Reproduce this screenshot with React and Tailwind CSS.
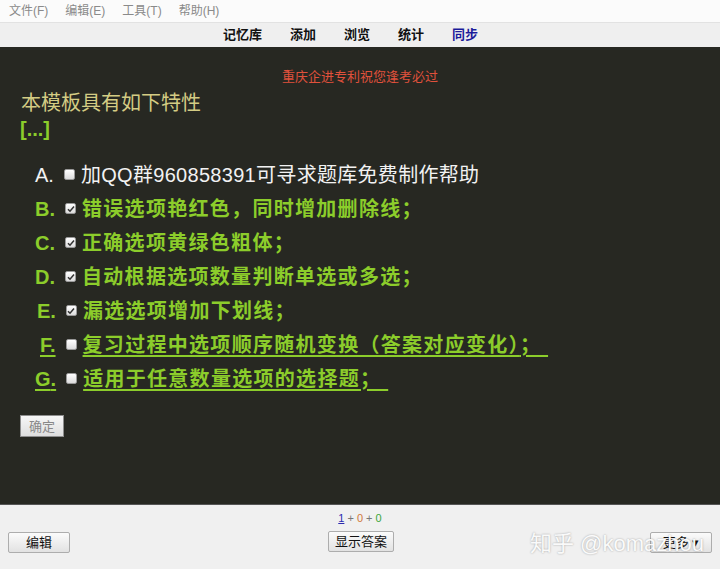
const options = [
  { key: "A", text: "加QQ群960858391可寻求题库免费制作帮助", state: "plain", checked: false, pl: "pl-[35px]" },
  { key: "B", text: "错误选项艳红色，同时增加删除线；", state: "ok", checked: true, pl: "pl-[35px]" },
  { key: "C", text: "正确选项黄绿色粗体；", state: "ok", checked: true, pl: "pl-[35px]" },
  { key: "D", text: "自动根据选项数量判断单选或多选；", state: "ok", checked: true, pl: "pl-[35px]" },
  { key: "E", text: "漏选选项增加下划线；", state: "ok", checked: true, pl: "pl-[37px]" },
  { key: "F", text: "复习过程中选项顺序随机变换（答案对应变化）", state: "miss", checked: false, pl: "pl-[40px]" },
  { key: "G", text: "适用于任意数量选项的选择题", state: "miss", checked: false, pl: "pl-[35px]" },
];

const Box = ({ checked }) => (
  <span className="ml-[10px] mr-[6px] inline-flex h-[11px] w-[11px] items-center justify-center rounded-[2px] border border-[#9a9a9a] bg-gradient-to-b from-[#ffffff] to-[#dcdcdc]">
    {checked && (
      <svg width="8" height="8" viewBox="0 0 8 8">
        <path d="M1 4.2 L3 6.2 L7 1.5" fill="none" stroke="#333" strokeWidth="1.5" />
      </svg>
    )}
  </span>
);

const Option = ({ o }) => {
  const plain = o.state === "plain";
  const miss = o.state === "miss";
  const tone = plain ? "text-[#f2f2f2]" : "font-bold text-[#8ccd2b]";
  const line = miss ? "underline underline-offset-[3px]" : "";
  return (
    <div className={`flex h-[34px] items-center ${o.pl}`}>
      <span className={`text-[20px] ${tone} ${line}`}>{o.key}.</span>
      <Box checked={o.checked} />
      <span className={`text-[20px] ${tone} ${plain ? "tracking-[0.3px]" : "tracking-[1.3px]"} ${line}`}>
        {o.text}
        {miss && "；\u00a0"}
      </span>
    </div>
  );
};

const Btn = ({ children, className = "" }) => (
  <button
    className={`h-[21px] rounded-[2px] border border-[#adadad] bg-gradient-to-b from-[#fbfbfb] to-[#e2e2e2] text-[13px] text-[#111] ${className}`}
  >
    {children}
  </button>
);

export default function App() {
  return (
    <div
      className="relative flex h-[569px] w-[720px] flex-col overflow-hidden bg-[#f0f0f0]"
      style={{ fontFamily: '"Liberation Sans", "Noto Sans CJK SC", sans-serif' }}
    >
      <div className="flex h-[22px] items-center gap-[17px] bg-[#fbfbfb] pl-[9px] text-[12px] text-[#8a8a8a]">
        <span>文件(F)</span>
        <span>编辑(E)</span>
        <span>工具(T)</span>
        <span>帮助(H)</span>
      </div>
      <div className="flex h-[25px] items-center justify-center gap-[28px] border-t border-[#e2e2e2] bg-[#efefef] pr-[19px] text-[13px] font-bold text-[#111]">
        <span>记忆库</span>
        <span>添加</span>
        <span>浏览</span>
        <span>统计</span>
        <span className="text-[#1b1b9a]">同步</span>
      </div>
      <div className="flex h-[457px] flex-col bg-[#272822]">
        <div className="pt-[20px] text-center text-[13px] text-[#e0513c]">重庆企进专利祝您逢考必过</div>
        <div className="mt-[3px] pl-[21px] text-[20px] leading-[26px] text-[#d4cc84]">本模板具有如下特性</div>
        <div className="pl-[20px] text-[20px] font-bold leading-[26px] text-[#8ccd2b]">[...]</div>
        <div className="mt-[16px] flex flex-col">
          {options.map((o) => (
            <Option key={o.key} o={o} />
          ))}
        </div>
        <div className="mt-[18px] pl-[20px]">
          <button className="h-[22px] w-[44px] border border-[#8e8e8e] bg-gradient-to-b from-[#f7f7f7] to-[#dedede] text-[13px] text-[#888]">
            确定
          </button>
        </div>
      </div>
      <div className="flex flex-1 flex-col border-t border-[#555]">
        <div className="pt-[6px] text-center text-[11px] leading-[14px]">
          <span className="text-[#2b2bb0] underline">1</span>
          <span className="text-[#777]"> + </span>
          <span className="text-[#d2783c]">0</span>
          <span className="text-[#777]"> + </span>
          <span className="text-[#3aa63a]">0</span>
        </div>
        <div className="mt-[5px] flex items-center justify-between px-[8px]">
          <Btn className="mt-[2px] w-[62px]">编辑</Btn>
          <Btn className="ml-[2px] w-[66px]">显示答案</Btn>
          <Btn className="mt-[2px] w-[62px]">更多 ▾</Btn>
        </div>
      </div>
      <div className="pointer-events-none absolute left-[530px] top-[527px] text-[22px] text-[#fafafa] [text-shadow:0_0_2px_rgba(0,0,0,0.35)]">
        知乎 @komazhou
      </div>
    </div>
  );
}
